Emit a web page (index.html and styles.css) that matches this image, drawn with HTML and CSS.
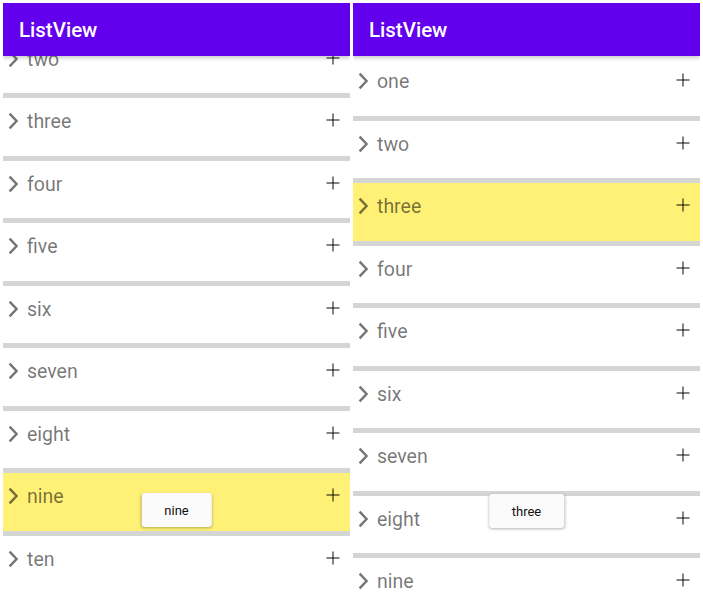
FILE: index.html
```html
<!DOCTYPE html>
<html lang="en">
<head>
  <meta charset="UTF-8"/>
  <meta name="viewport" content="width=device-width,initial-scale=1.0"/>
  <title>ListView</title>
  <link rel="stylesheet" href="styles.css">
</head>
<body>
  <div class="screens">
    <div class="phone">
      <div class="app-bar">ListView</div>
      <div class="list scrolled" id="list-a"></div>
      <div class="toast">nine</div>
    </div>
    <div class="phone">
      <div class="app-bar">ListView</div>
      <div class="list" id="list-b"></div>
      <div class="toast toast-b">three</div>
    </div>
  </div>

  <script>
    const names = ['one', 'two', 'three', 'four', 'five', 'six', 'seven', 'eight', 'nine', 'ten'];

    const chevron = `
      <svg class="chevron" viewBox="0 0 10 18">
        <polyline points="1.6,1.6 8.6,9 1.6,16.4"/>
      </svg>`;
    const plus = `
      <svg class="plus" viewBox="0 0 14 14">
        <line x1="7" y1="0.5" x2="7" y2="13.5"/>
        <line x1="0.5" y1="7" x2="13.5" y2="7"/>
      </svg>`;

    function fillList(id, selected) {
      const list = document.getElementById(id);
      names.forEach(name => {
        const row = document.createElement('div');
        row.className = 'item' + (name === selected ? ' selected' : '');
        row.innerHTML = `${chevron}<span class="label">${name}</span>${plus}`;
        list.appendChild(row);
      });
    }

    fillList('list-a', 'nine');
    fillList('list-b', 'three');
  </script>
</body>
</html>
```

FILE: styles.css
```css
:root {
  --primary: #6200ee;
  --divider: #d4d6d6;
  --icon: rgba(0, 0, 0, 0.54);
  --selected: #fff176;
}
* { box-sizing: border-box; }
html, body { margin: 0; height: 598px; overflow: hidden; background: #fff; }
body { font-family: Roboto, 'Noto Sans', sans-serif; }

.screens {
  display: flex; gap: 3px;
  padding: 3px 3px 0;
  height: 598px;
}
.phone {
  position: relative;
  flex: 1;
  display: flex; flex-direction: column;
  overflow: hidden;
  background: #fff;
}

.app-bar {
  position: relative; z-index: 1;
  flex: none;
  height: 53px;
  padding-left: 16px;
  display: flex; align-items: center;
  background: var(--primary);
  color: #fff;
  font-size: 20.5px; font-weight: 500;
  box-shadow: 0 2px 4px rgba(0, 0, 0, 0.22);
}

.list { margin-top: 2px; }
.list.scrolled { margin-top: -83px; }

.item {
  box-sizing: content-box;
  height: 57.5px;
  display: flex; align-items: flex-start;
  padding: 0 10px 0 5px;
  border-bottom: 5px solid var(--divider);
  color: var(--icon);
}
.item:last-child { border-bottom: none; }
.item.selected { background: var(--selected); }

.chevron {
  width: 10px; height: 18px;
  margin-top: 14px;
  fill: none; stroke: currentColor; stroke-width: 2.5;
}
.label {
  flex: 1;
  margin-left: 9px;
  padding-top: 12px;
  font-size: 19.5px; line-height: 24px;
}
.plus {
  width: 14px; height: 14px;
  margin-top: 15px;
  stroke: currentColor; stroke-width: 1.8;
}

.toast {
  position: absolute; top: 490px; left: 50%;
  transform: translateX(-50%);
  height: 34px;
  padding: 0 23px;
  display: flex; align-items: center;
  background: #fbfbfb;
  border-radius: 3px;
  box-shadow: 0 1px 3px rgba(0, 0, 0, 0.3);
  color: #111;
  font-size: 13px;
}
.toast-b { top: 491px; }
```
